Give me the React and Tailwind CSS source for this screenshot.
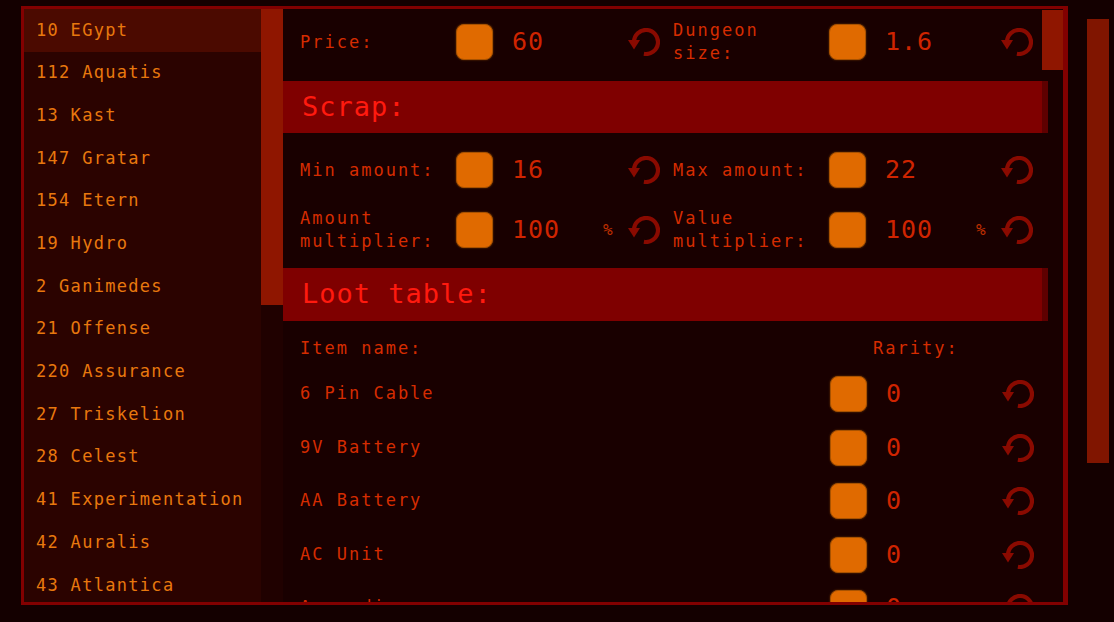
import React from 'react';

const planets = [
  '10 EGypt', '112 Aquatis', '13 Kast', '147 Gratar', '154 Etern', '19 Hydro', '2 Ganimedes',
  '21 Offense', '220 Assurance', '27 Triskelion', '28 Celest', '41 Experimentation', '42 Auralis', '43 Atlantica',
];

const loot = ['6 Pin Cable', '9V Battery', 'AA Battery', 'AC Unit', 'Accordion'];

const ResetIcon = () => (
  <svg width="32" height="28" viewBox="0 0 32 28" className="shrink-0">
    <path d="M6 14 A12 12 0 1 1 15.9 25.8" fill="none" stroke="#8a0a00" strokeWidth="4.2" />
    <path d="M0 12 L12 12 L6 21.5 Z" fill="#8a0a00" />
  </svg>
);

const Knob = () => (
  <div className="w-[37px] h-[36px] shrink-0 rounded-[8px] bg-[#e06a00] border border-[#a85200] shadow-[0_0_2px_#7a3a00]" />
);

const Setting = ({ label, value, pct }) => (
  <div className="flex items-center w-[374px] h-[36px]">
    <div className="w-[156px] text-[17px] leading-[23px] tracking-[2px] text-[#d52c00]">
      {label.map((l) => (
        <div key={l}>{l}</div>
      ))}
    </div>
    <Knob />
    <div className="ml-[19px] w-[91px] text-[25px] tracking-[1px] text-[#cf2400]">{value}</div>
    <div className="w-[25px] text-[16px] text-[#c23000]">{pct ? '%' : ''}</div>
    <ResetIcon />
  </div>
);

const Header = ({ children }) => (
  <div className="mr-[15px] flex items-center pl-[19px] bg-[#7f0000] border-r-[6px] border-[#5e0000] text-[27px] tracking-[1px] text-[#ff1a0f]">
    {children}
  </div>
);

export default function App() {
  return (
    <div className="w-full h-[622px] bg-[#140000] flex overflow-hidden font-['DejaVu_Sans_Mono',monospace]">
      <div className="ml-[21px] mt-[6px] w-[1047px] h-[599px] shrink-0 border-t-[3px] border-l-[3px] border-b-[3px] border-r-[5px] border-[#820000] flex overflow-hidden">
        {/* moon list */}
        <div className="w-[237px] bg-[#2b0300] flex flex-col overflow-hidden">
          {planets.map((p, i) => (
            <div
              key={p}
              className={`h-[42.7px] shrink-0 flex items-center pl-[12px] text-[17px] tracking-[1.3px] text-[#e8780e] ${i === 0 ? 'bg-[#4b0a00]' : ''}`}
            >
              {p}
            </div>
          ))}
        </div>
        <div className="w-[22px] bg-[#200100]">
          <div className="h-[296px] bg-[#8f1600]" />
        </div>

        {/* settings */}
        <div className="flex-1 bg-[#190000] relative overflow-hidden">
          <div className="flex px-[17px] pt-[15px] pb-[21px]">
            <Setting label={['Price:']} value="60" />
            <Setting label={['Dungeon', 'size:']} value="1.6" />
          </div>

          <Header>
            <div className="h-[52px] flex items-center">Scrap:</div>
          </Header>

          <div className="flex px-[17px] mt-[19px]">
            <Setting label={['Min amount:']} value="16" />
            <Setting label={['Max amount:']} value="22" />
          </div>
          <div className="flex px-[17px] mt-[24px]">
            <Setting label={['Amount', 'multiplier:']} value="100" pct />
            <Setting label={['Value', 'multiplier:']} value="100" pct />
          </div>

          <div className="mt-[20px]">
            <Header>
              <div className="h-[53px] flex items-center">Loot table:</div>
            </Header>
          </div>

          <div className="flex px-[17px] mt-[16px] h-[24px] items-center text-[17px] tracking-[2px] text-[#d52c00]">
            <div className="w-[573px]">Item name:</div>
            <div>Rarity:</div>
          </div>

          <div className="flex flex-col gap-[17.5px] mt-[15px]">
            {loot.map((name) => (
              <div key={name} className="flex items-center px-[17px] h-[36px]">
                <div className="w-[530px] text-[17px] tracking-[2px] text-[#d52c00]">{name}</div>
                <Knob />
                <div className="ml-[19px] w-[91px] text-[25px] tracking-[1px] text-[#cf2400]">0</div>
                <div className="w-[25px]" />
                <ResetIcon />
              </div>
            ))}
          </div>

          <div className="absolute top-[1px] right-0 w-[21px] h-[60px] bg-[#8f1600]" />
        </div>
      </div>

      {/* page scrollbar */}
      <div className="ml-[19px] w-[22px] shrink-0">
        <div className="mt-[19px] h-[444px] bg-[#801500]" />
      </div>
    </div>
  );
}
